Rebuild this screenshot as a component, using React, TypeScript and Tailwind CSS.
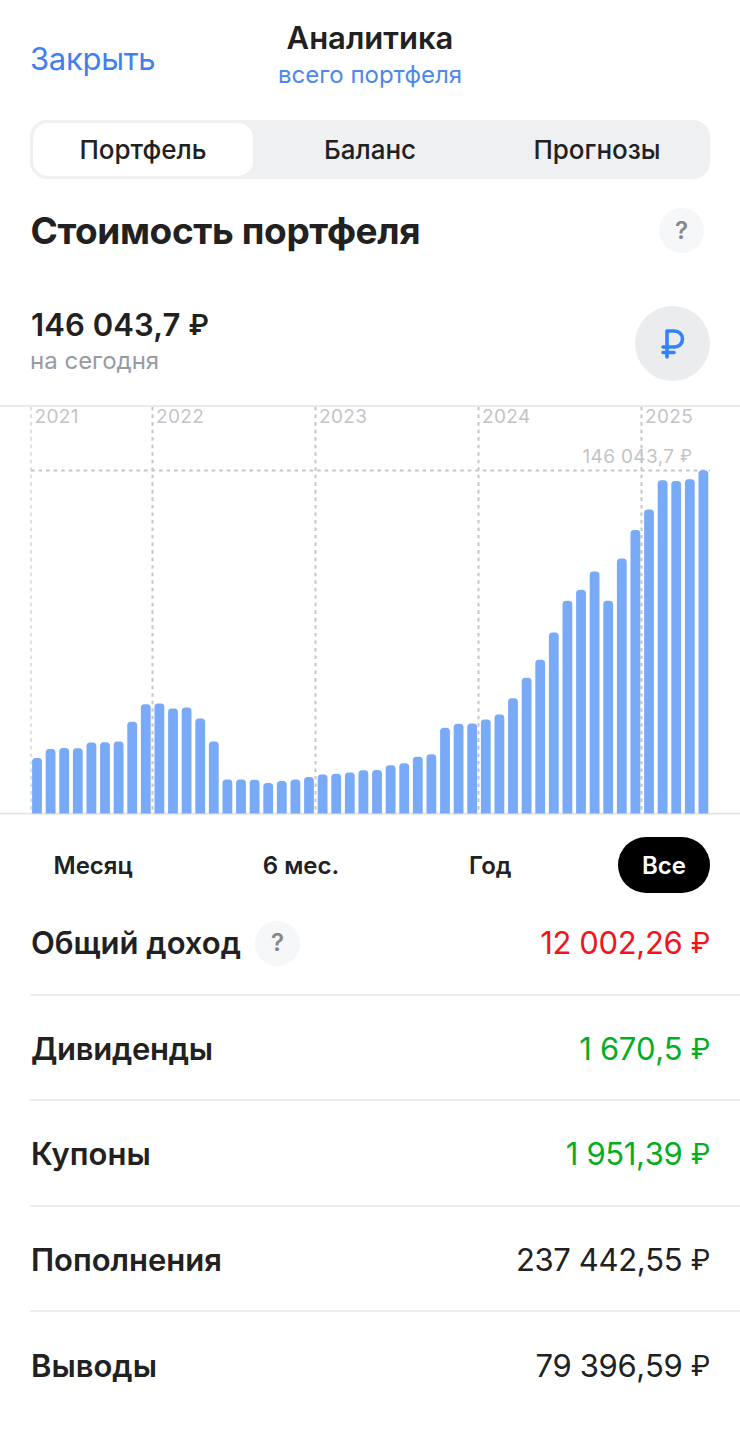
import clsx from "clsx"

const tabs = ["Портфель", "Баланс", "Прогнозы"]

const periods = ["Месяц", "6 мес.", "Год", "Все"]

const years = [
    { label: "2021", x: 31 },
    { label: "2022", x: 152.5 },
    { label: "2023", x: 315.5 },
    { label: "2024", x: 478.5 },
    { label: "2025", x: 641.5 },
]

// Monthly portfolio value, as bar heights in px
const bars = [
    55.5, 64.5, 65.5, 65.2, 71, 71.3, 72, 91.7, 109.3, 110, 105, 106, 95, 72, 34, 34, 33.8, 30.5, 32.5, 34,
    36.5, 39, 39.7, 41, 43.3, 43.5, 48.3, 50.3, 56.7, 59.3, 85.7, 89.7, 90, 94, 99, 115.3, 135.7, 153.7,
    181, 212.7, 223.7, 242, 212.7, 255, 283.5, 304, 333.3, 332.5, 334.3, 343.3,
]

const rows = [
    { label: "Общий доход", value: "12 002,26", color: "text-[#f2131b]", help: true },
    { label: "Дивиденды", value: "1 670,5", color: "text-[#05ad22]" },
    { label: "Купоны", value: "1 951,39", color: "text-[#05ad22]" },
    { label: "Пополнения", value: "237 442,55", color: "text-[#212122]" },
    { label: "Выводы", value: "79 396,59", color: "text-[#212122]" },
]

function Help() {
    return (
        <button className="flex h-[45px] w-[45px] items-center justify-center rounded-full bg-[#f6f7f9] text-2xl font-semibold text-[#85878b]">
            ?
        </button>
    )
}

function Chart() {
    return (
        <svg width="740" height="410" viewBox="0 405 740 410" className="block">
            <path d="M0 406H740M0 813.7H740" stroke="#e2e3e4" strokeWidth="1.7" />
            {years.map((year) => (
                <g key={year.label}>
                    <path
                        d={`M${year.x} 407V813`}
                        stroke="#c6c6c8"
                        strokeWidth={year.label === "2021" ? 1.1 : 2}
                        strokeDasharray="3.6 3.93"
                    />
                    <text x={year.x + 3.5} y="423" fontSize="19" letterSpacing="0.4" fill="#c3c4c7">
                        {year.label}
                    </text>
                </g>
            ))}
            <text x="582.5" y="462.5" fontSize="19" letterSpacing="0.35" fill="#c3c4c7">
                146 043,7 <tspan fontSize="17" dy="-0.5">₽</tspan>
            </text>
            <path d="M31 470.5H710" stroke="#c6c6c8" strokeWidth="2" strokeDasharray="3.6 3.93" />
            {bars.map((height, index) => {
                const x = 32.1 + index * 13.6
                const top = 813.5 - height
                return (
                    <path
                        key={index}
                        d={`M${x} 813.5V${top + 3.5}q0-3.5 3.5-3.5h2.8q3.5 0 3.5 3.5V813.5z`}
                        fill="#78aaf8"
                    />
                )
            })}
        </svg>
    )
}

export default function App() {
    return (
        <main className="h-[1436px] w-[740px] overflow-hidden bg-white font-['Inter','Noto_Sans',sans-serif] text-[#212122]">
            <header className="grid h-[120px] grid-cols-[1fr_auto_1fr] px-[30px]">
                <button className="mt-[39px] h-10 justify-self-start text-[31px] leading-10 tracking-[-0.3px] text-[#3f80f0]">Закрыть</button>
                <div className="pt-[18.5px] text-center">
                    <h1 className="text-[31px] leading-[38px] font-semibold">Аналитика</h1>
                    <p className="text-2xl leading-[35px] text-[#4c88ed]">всего портфеля</p>
                </div>
            </header>

            <nav className="mx-[30px] flex h-[59px] rounded-[17px] bg-[#eff0f2] p-[3px]">
                {tabs.map((tab, index) => (
                    <button
                        key={tab}
                        className={clsx(
                            "flex items-center justify-center rounded-[15px] text-[26px] font-medium",
                            index === 0 && "bg-white",
                            index === 1 ? "w-[234px]" : "w-[220px]",
                        )}
                    >
                        {tab}
                    </button>
                ))}
            </nav>

            <section>
                <div className="flex h-[103px] items-center justify-between pr-9 pl-[30.5px]">
                    <h2 className="text-[37px] font-bold tracking-[-0.4px]">Стоимость портфеля</h2>
                    <Help />
                </div>
                <div className="flex h-[123px] items-center justify-between px-[30px]">
                    <div className="pb-[7px]">
                        <p className="pt-px pl-px text-[31px] leading-[41px] font-semibold tracking-[0.1px]">
                            146 043,7 <span className="align-[1.5px] text-[28px] leading-none">₽</span>
                        </p>
                        <p className="text-2xl leading-8 text-[#969ba3]">на сегодня</p>
                    </div>
                    <button className="flex h-[75px] w-[75px] items-center justify-center rounded-full bg-[#ebecee]">
                        <svg width="26" height="32" viewBox="0 0 26 32" fill="none" stroke="#3482fa" strokeWidth="3.6" strokeLinecap="round" strokeLinejoin="round">
                            <path d="M7 29V3h7.5a8 8 0 0 1 0 16H3M3 24.5h11" />
                        </svg>
                    </button>
                </div>
                <Chart />
            </section>

            <div className="flex h-[100px] items-center justify-between px-[30px]">
                {periods.map((period) => (
                    <button
                        key={period}
                        className={clsx(
                            "h-14 rounded-full px-[23.5px] pt-0.5 text-2xl font-semibold",
                            period === "Все" && "w-[92px] bg-black text-white",
                        )}
                    >
                        {period}
                    </button>
                ))}
            </div>

            <section className="-mt-[25px] pl-[30px]">
                {rows.map((row) => (
                    <div key={row.label} className="flex h-[105.5px] items-center justify-between border-b-2 border-[#ececed] pt-[3px] pr-[30px] last:border-0">
                        <div className="flex items-center gap-3.5">
                            <h3 className={clsx("pl-px text-[31px] font-semibold", row.label === "Дивиденды" && "tracking-[-0.3px]")}>
                                {row.label}
                            </h3>
                            {row.help && <Help />}
                        </div>
                        <p className={clsx("text-[31px] tracking-[-0.35px] [font-kerning:none]", row.color)}>
                            {row.value} <span className="align-[1.5px] text-[28px] leading-none">₽</span>
                        </p>
                    </div>
                ))}
            </section>
        </main>
    )
}
